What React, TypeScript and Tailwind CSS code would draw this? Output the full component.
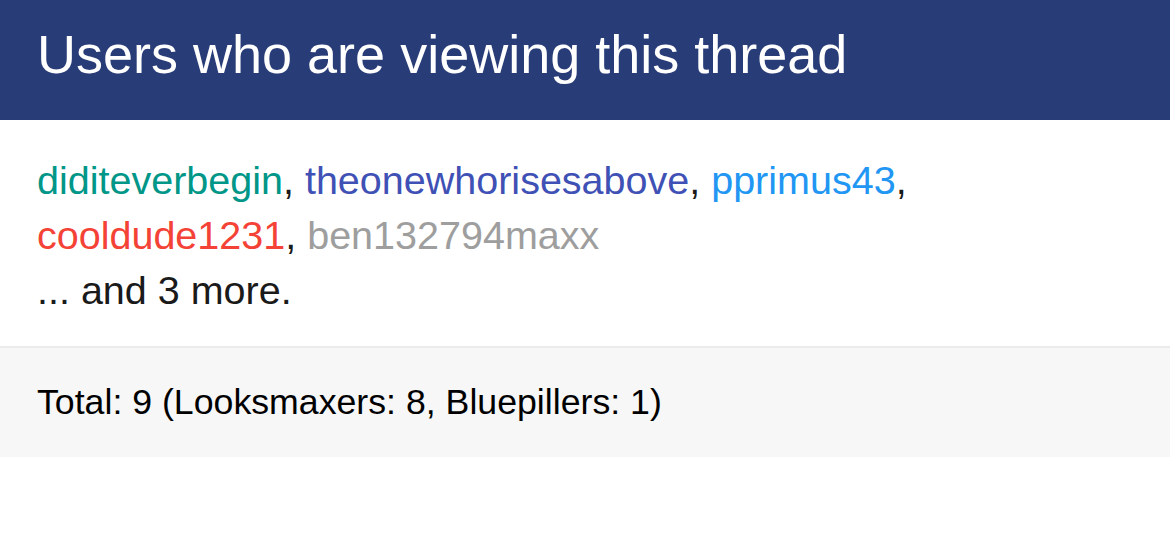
export default function App() {
  return (
    <div className="w-[1170px] bg-white" style={{ fontFamily: '"Liberation Sans", Arial, sans-serif' }}>
      <div className="h-[120px] bg-[#283c77] px-[37px] pt-[27px]">
        <h1 className="text-[54px] leading-none text-white">Users who are viewing this thread</h1>
      </div>
      <div className="px-[37px] pt-[33px] pb-[28px] text-[39.5px] leading-[55px] text-[#1a1a1a]">
        <div>
          <span className="text-[#009688]">diditeverbegin</span>,{" "}
          <span className="text-[#3f51b5]">theonewhorisesabove</span>,{" "}
          <span className="text-[#2196f3]">pprimus43</span>,
        </div>
        <div>
          <span className="text-[#f44336]">cooldude1231</span>,{" "}
          <span className="text-[#9e9e9e]">ben132794maxx</span>
        </div>
        <div>... and 3 more.</div>
      </div>
      <div className="border-t-2 border-[#ebebeb] bg-[#f7f7f7] h-[111px] px-[37px] pt-[37px]">
        <p className="text-[35.7px] leading-none text-black">Total: 9 (Looksmaxers: 8, Bluepillers: 1)</p>
      </div>
    </div>
  );
}
